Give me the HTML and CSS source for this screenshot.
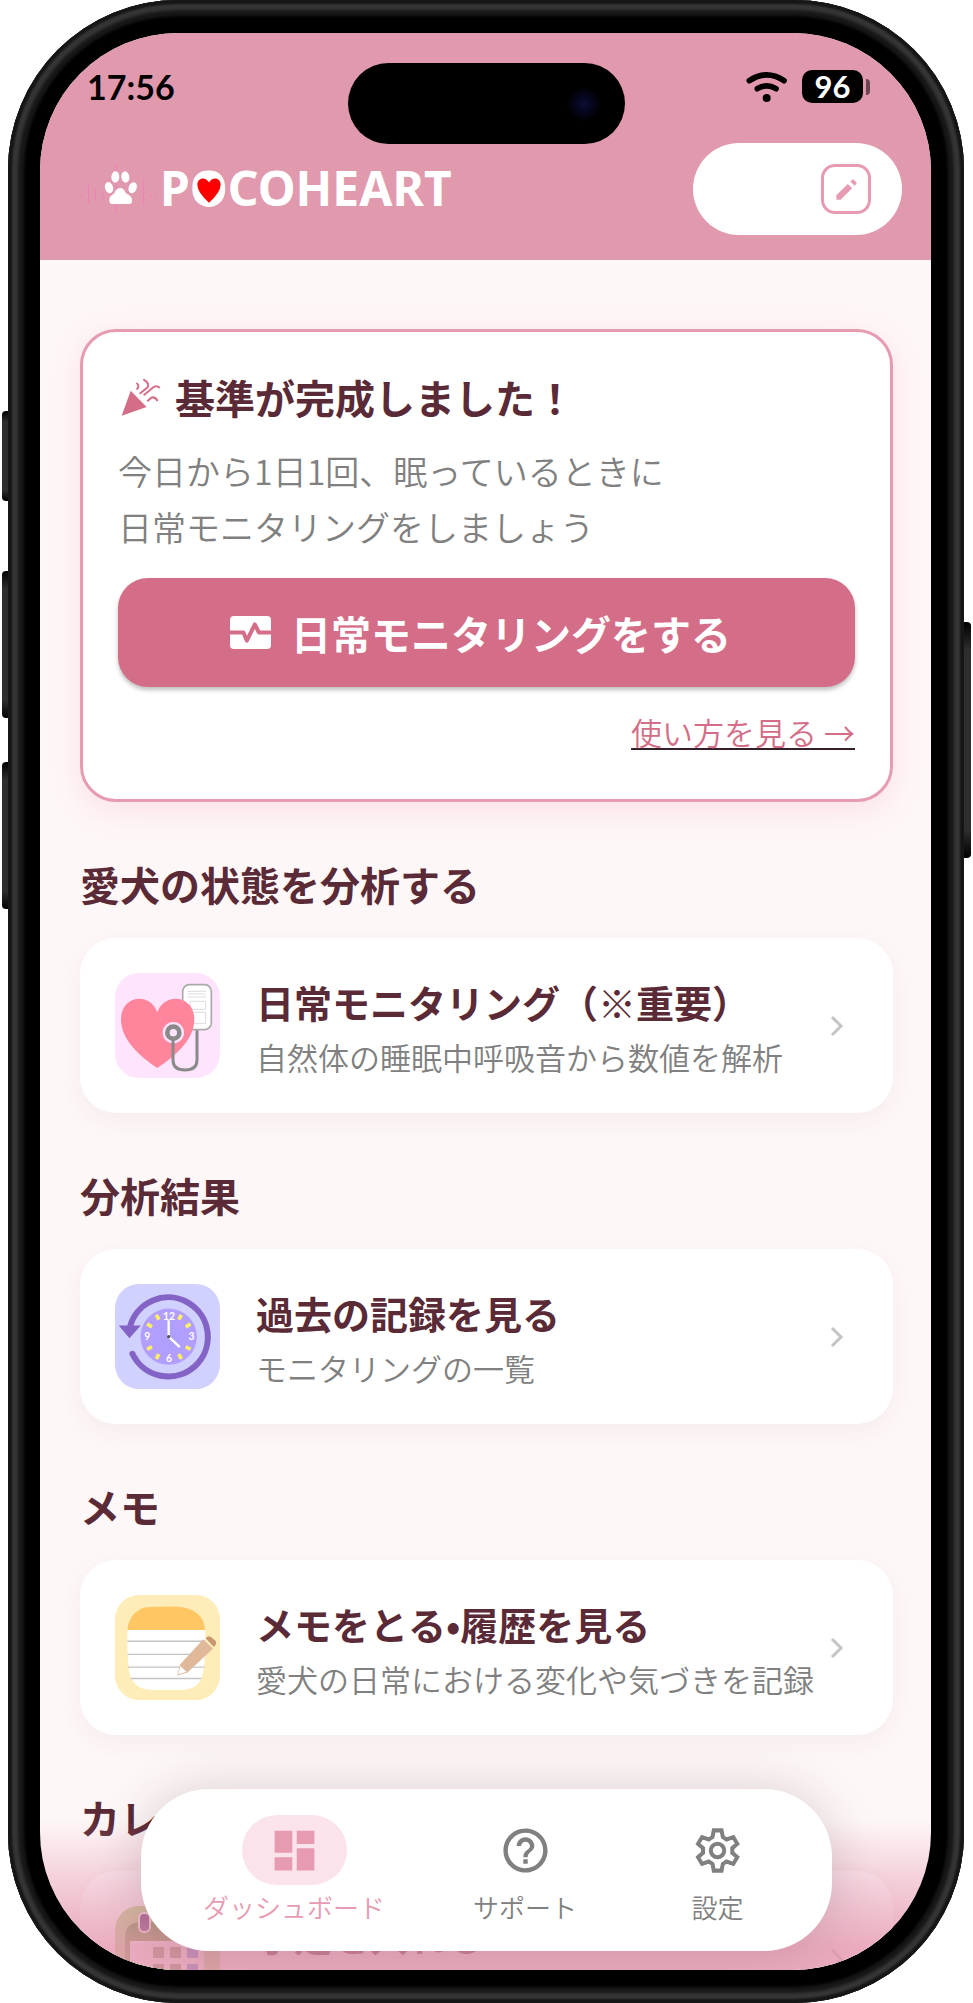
FILE: index.html
```html
<!DOCTYPE html>
<html lang="ja">
<head>
    <meta charset="UTF-8">
    <meta name="viewport" content="width=device-width, initial-scale=1.0">
    <title>POCOHEART</title>
    <link rel="stylesheet" href="styles.css">
</head>
<body>
    <div class="phone">
        <span class="side-button action"></span>
        <span class="side-button volume-up"></span>
        <span class="side-button volume-down"></span>
        <span class="side-button power"></span>

        <div class="screen">
            <div class="island"><span class="lens"></span></div>

            <header class="header">
                <div class="status-bar">
                    <span class="time">17:56</span>
                    <div class="status-icons">
                        <svg class="wifi" viewBox="776 212 126 96" aria-hidden="true">
                            <g fill="none" stroke="#000" stroke-linecap="round">
                                <path d="M786 241Q838 206 890 241" stroke-width="17"/>
                                <path d="M810 265Q838 248 866 265" stroke-width="17"/>
                            </g>
                            <circle cx="838" cy="293" r="12"/>
                        </svg>
                        <span class="battery">96</span>
                    </div>
                </div>
                <div class="app-bar">
                    <div class="logo">
                        <svg class="paw" viewBox="240 486 234 156" aria-hidden="true">
                            <g stroke="#f07fba" stroke-width="3" fill="none">
                                <path d="M245 580v8M266 550v56M286 566v32M308 572v28M349 488v150M431 534v78M452 576v12M470 580v6"/>
                            </g>
                            <g fill="#fff">
                                <ellipse cx="346" cy="528" rx="12" ry="17" transform="rotate(4 346 528)"/>
                                <ellipse cx="376" cy="528" rx="12" ry="17" transform="rotate(-8 376 528)"/>
                                <ellipse cx="327" cy="560" rx="12" ry="17" transform="rotate(-16 327 560)"/>
                                <ellipse cx="398" cy="560" rx="12" ry="17" transform="rotate(22 398 560)"/>
                                <path d="M361 561c10 0 14 10 17 16 7 5 18 8 18 20 0 8-2 12-8 12h-52c-6 0-8-4-8-12 0-12 9-14 15-20 3-7 8-16 18-16z"/>
                            </g>
                        </svg>
                        <span class="logo-text">P<span class="logo-o">O<svg viewBox="0 0 32 34" aria-hidden="true"><ellipse cx="16" cy="17" rx="15" ry="16" fill="#fff"/><path d="M16 29Q5 19 5 12C5 5 13 4 16 10C19 4 27 5 27 12Q27 19 16 29z" fill="#f00"/></svg></span>COHEART</span>
                    </div>
                    <div class="profile">
                        <button class="edit" type="button" aria-label="編集">
                            <svg viewBox="0 0 24 24"><path d="M3 17.2V21h3.800L17 10.800 13.200 7 3 17.200zM20.700 7c.4-.4.4-1 0-1.400L18.400 3.300c-.4-.4-1-.4-1.400 0l-1.600 1.600 3.800 3.800L20.700 7z"/></svg>
                        </button>
                    </div>
                </div>
            </header>

            <main class="content">
                <section class="notice">
                    <h2 class="notice-title">
                        <svg class="popper" viewBox="184 200 120 114" aria-hidden="true">
                            <path d="M213 238l48 49-75 26z" fill="#d46e88"/>
                            <g fill="none" stroke="#d46e88" stroke-width="6">
                                <path d="M230 215q12 8 1 20M251 204q20 12 13 24l-24 19M252 252l30-25q10-6 18 3M263 270l12-11q11-4 19 10"/>
                            </g>
                        </svg>
                        基準が完成しました！
                    </h2>
                    <p class="notice-text">今日から1日1回、眠っているときに<br>日常モニタリングをしましょう</p>
                    <button class="primary" type="button">
                        <svg viewBox="0 0 122 98" aria-hidden="true">
                            <rect width="122" height="98" rx="12" fill="#fff"/>
                            <path d="M0 49h40l10 24 24-48 12 24h36" fill="none" stroke="#d46e88" stroke-width="12" stroke-linejoin="round"/>
                        </svg>
                        日常モニタリングをする
                    </button>
                    <a class="guide" href="#">使い方を見る →</a>
                </section>

                <h2 class="section-title">愛犬の状態を分析する</h2>
                <a class="card" href="#">
                    <svg class="card-icon" viewBox="105 99 315 315" aria-hidden="true">
                        <rect x="105" y="99" width="315" height="315" rx="72" fill="#fee5fd"/>
                        <rect x="308" y="134" width="86" height="135" rx="20" fill="#fff" stroke="#aaa" stroke-width="5"/>
                        <path d="M323 154h55M323 162h55M323 171h55M330 184h47v24h-47zM330 217h47v33h-47z" fill="none" stroke="#ddd" stroke-width="3"/>
                        <path d="M232 384C180 350 123 300 123 238C123 165 210 155 232 217C254 155 343 165 343 238C343 300 284 350 232 384z" fill="#ff859c"/>
                        <path d="M279 298v62q0 30 36 30t36-30v-89" fill="none" stroke="#8a8a8a" stroke-width="9"/>
                        <circle cx="280" cy="278" r="32" fill="#fee5fd"/>
                        <path d="M279 298v20" stroke="#8a8a8a" stroke-width="9"/>
                        <circle cx="280" cy="278" r="18" fill="#fee5fd" stroke="#8a8a8a" stroke-width="14"/>
                    </svg>
                    <span class="card-text">
                        <span class="card-title">日常モニタリング（※重要）</span>
                        <span class="card-sub">自然体の睡眠中呼吸音から数値を解析</span>
                    </span>
                    <svg class="chevron" viewBox="0 0 14 22" aria-hidden="true"><path d="M2 2l9 9-9 9"/></svg>
                </a>

                <h2 class="section-title">分析結果</h2>
                <a class="card" href="#">
                    <svg class="card-icon" viewBox="105 74 313 313" aria-hidden="true">
                        <rect x="105" y="74" width="313" height="313" rx="72" fill="#d1d1ff"/>
                        <path d="M149 204A118 118 0 1 1 157 282" fill="none" stroke="#8463c6" stroke-width="18" stroke-linecap="round"/>
                        <path d="M116 198h66l-34 38z" fill="#8463c6"/>
                        <circle cx="265" cy="231" r="84" fill="#b19eff"/>
                        <path d="M228 166l8 14M303 166l-8 14M201 193l14 9M330 193l-14 9M201 269l14-8M330 269l-14-8M228 297l8-14M303 297l-8-14" stroke="#fff064" stroke-width="11"/>
                        <g class="dial">
                            <text x="266" y="180">12</text>
                            <text x="333" y="241">3</text>
                            <text x="266" y="306">6</text>
                            <text x="201" y="241">9</text>
                        </g>
                        <path d="M265 231v-49M265 231l33 31" stroke="#fff" stroke-width="7"/>
                        <circle cx="265" cy="231" r="5" fill="#555"/>
                    </svg>
                    <span class="card-text">
                        <span class="card-title">過去の記録を見る</span>
                        <span class="card-sub">モニタリングの一覧</span>
                    </span>
                    <svg class="chevron" viewBox="0 0 14 22" aria-hidden="true"><path d="M2 2l9 9-9 9"/></svg>
                </a>

                <h2 class="section-title">メモ</h2>
                <a class="card" href="#">
                    <svg class="card-icon" viewBox="105 77 313 313" aria-hidden="true">
                        <rect x="105" y="77" width="313" height="313" rx="72" fill="#ffedb9"/>
                        <path d="M142 180h231q4 60-4 120q-7 60-65 60h-90q-58 0-68-60q-6-60-4-120z" fill="#fff"/>
                        <path d="M142 181q3-40 32-58q15-11 40-10q40-3 80-1q35 2 58 22q20 17 21 47z" fill="#ffc663"/>
                        <path d="M142 215h232M142 254h232M143 292h229M152 326h210" stroke="#c4c4c4" stroke-width="4"/>
                        <path d="M368 209l29 28-76 71-31 10 9-34z" fill="#dfb999"/>
                        <path d="M300 289l18 17-25 8z" fill="#fff"/>
                        <path d="M375 206q8-9 16-4l14 12q5 6-5 18z" fill="#c9976f"/>
                    </svg>
                    <span class="card-text">
                        <span class="card-title">メモをとる•履歴を見る</span>
                        <span class="card-sub">愛犬の日常における変化や気づきを記録</span>
                    </span>
                    <svg class="chevron" viewBox="0 0 14 22" aria-hidden="true"><path d="M2 2l9 9-9 9"/></svg>
                </a>

                <h2 class="section-title">カレンダー</h2>
                <a class="card" href="#">
                    <svg class="card-icon" viewBox="0 0 105 105" aria-hidden="true">
                        <rect width="105" height="105" rx="24" fill="#b9dc8c"/>
                        <path d="M10 90V32Q10 16 26 16H72Q89 16 89 32V90z" fill="#6f9a3c"/>
                        <path d="M15 35h74v60H15z" fill="#fff"/>
                        <rect x="24" y="7" width="11" height="19" rx="5" fill="#6a3a78" stroke="#fff" stroke-width="2"/>
                        <path d="M38 41h11v11H38zM55 41h11v11H55zM38 58h11v11H38zM55 58h11v11H55z" fill="#7d8f60"/>
                        <path d="M72 41h11v11H72zM72 58h11v11H72z" fill="#5a7fe0"/>
                    </svg>
                    <span class="card-text">
                        <span class="card-title">予定を入れる</span>
                    </span>
                    <svg class="chevron" viewBox="0 0 14 22" aria-hidden="true"><path d="M2 2l9 9-9 9"/></svg>
                </a>
            </main>

            <div class="fade"></div>
            <nav class="tabs">
                <a class="tab active" href="#">
                    <span class="tab-icon">
                        <svg viewBox="0 0 24 24" aria-hidden="true"><path d="M3 13h8V3H3v10zm0 8h8v-6H3v6zm10 0h8V11h-8v10zm0-18v6h8V3h-8z"/></svg>
                    </span>
                    ダッシュボード
                </a>
                <a class="tab" href="#">
                    <span class="tab-icon">
                        <svg viewBox="0 0 24 24" aria-hidden="true"><path d="M11 18h2v-2h-2v2zm1-16C6.480 2 2 6.480 2 12s4.480 10 10 10 10-4.480 10-10S17.520 2 12 2zm0 18c-4.410 0-8-3.590-8-8s3.590-8 8-8 8 3.590 8 8-3.590 8-8 8zm0-14c-2.210 0-4 1.790-4 4h2c0-1.100.9-2 2-2s2 .9 2 2c0 2-3 1.750-3 5h2c0-2.250 3-2.500 3-5 0-2.210-1.790-4-4-4z"/></svg>
                    </span>
                    サポート
                </a>
                <a class="tab" href="#">
                    <span class="tab-icon">
                        <svg viewBox="612 251 158 158" aria-hidden="true">
                            <path d="M680 270h23l4 20 11 7 20-7 12 20-15 13v14l15 13-12 20-20-7-11 7-4 20h-23l-4-20-11-7-20 7-12-20 15-13v-14l-15-13 12-20 20 7 11-7z" fill="none" stroke="currentColor" stroke-width="12"/>
                            <circle cx="691" cy="330" r="20" fill="none" stroke="currentColor" stroke-width="12"/>
                        </svg>
                    </span>
                    設定
                </a>
            </nav>
        </div>
    </div>
</body>
</html>
```

FILE: styles.css
```css
* {
    box-sizing: border-box;
}
body {
    margin: 0;
    background-color: #fff;
    font-family: "Noto Sans CJK JP", sans-serif;
    color: #5a2a36;
}
a {
    color: inherit;
    text-decoration: none;
}
h2, p {
    margin: 0;
}
svg {
    display: block;
    flex: none;
}

/* device frame */
.phone {
    position: relative;
    height: 100vh;
    margin: 0 9px 0 8px;
    padding: 33px 33px 33px 32px;
    border-radius: 170px;
    background: #000;
    box-shadow: inset 0 0 2px 4px #161616, inset 0 0 3px 10px #363636, inset 0 0 3px 16px #181818;
}
.side-button {
    position: absolute;
    left: -6px;
    width: 6px;
    background: linear-gradient(#000, #2e2e2e 12%, #2e2e2e 88%, #000);
    border-radius: 4px 0 0 4px;
}
.action {
    top: 411px;
    height: 90px;
}
.volume-up {
    top: 571px;
    height: 147px;
}
.volume-down {
    top: 762px;
    height: 147px;
}
.power {
    top: 622px;
    left: auto;
    right: -7px;
    width: 7px;
    height: 236px;
    border-radius: 0 4px 4px 0;
}
.screen {
    position: relative;
    height: 100%;
    overflow: hidden;
    border-radius: 138px;
    background-color: #fef7f7;
}
.island {
    position: absolute;
    top: 30px;
    left: 50%;
    width: 277px;
    height: 81px;
    margin-left: -138px;
    border-radius: 41px;
    background-color: #000;
}
.lens {
    position: absolute;
    top: 24px;
    right: 24px;
    width: 34px;
    height: 34px;
    border-radius: 50%;
    background: radial-gradient(#0a0c38, #000 70%);
}

/* header */
.header {
    padding-bottom: 25px;
    background-color: #e099ad;
}
.status-bar {
    display: flex;
    justify-content: space-between;
    align-items: center;
    padding: 37px 68px 0 47px;
    color: #000;
}
.time {
    font: 700 34px/33px Lato, sans-serif;
}
.status-icons {
    display: flex;
    align-items: center;
    gap: 14px;
}
.wifi {
    width: 42px;
    height: 32px;
}
.battery {
    position: relative;
    width: 61px;
    height: 33px;
    border-radius: 10px;
    background-color: #000;
    color: #fff;
    font: 700 31px/33px Lato, sans-serif;
    text-align: center;
}
.battery::after {
    content: "";
    position: absolute;
    top: 9px;
    right: -7px;
    width: 4px;
    height: 16px;
    border-radius: 0 4px 4px 0;
    background-color: #6b4450;
}
.app-bar {
    display: flex;
    justify-content: space-between;
    align-items: center;
    margin-top: 40px;
    padding: 0 29px 0 40px;
}
.logo {
    display: flex;
    align-items: center;
    gap: 2px;
}
.paw {
    width: 78px;
    height: 52px;
}
.logo-text {
    padding-bottom: 2px;
    color: #fff;
    font: 700 48px/60px "Noto Sans", sans-serif;
}
.logo-o {
    position: relative;
}
.logo-o svg {
    position: absolute;
    left: 2px;
    bottom: 12px;
    width: 34px;
    height: 36px;
}
.profile {
    display: flex;
    justify-content: flex-end;
    align-items: center;
    width: 209px;
    height: 92px;
    padding-right: 31px;
    border-radius: 46px;
    background-color: #fff;
}
.edit {
    display: grid;
    place-items: center;
    width: 50px;
    height: 50px;
    padding: 0;
    border: 3px solid #e79bb1;
    border-radius: 14px;
    background-color: #fff;
}
.edit svg {
    width: 27px;
    height: 27px;
    fill: #e79bb1;
}

/* notice card */
.content {
    padding: 69px 38px 0 40px;
}
.notice {
    display: flex;
    flex-direction: column;
    height: 473px;
    padding: 35px;
    border: 3px solid #e79bb1;
    border-radius: 36px;
    background-color: #fff;
    box-shadow: 0 8px 32px rgba(240, 130, 160, 0.18);
}
.notice-title {
    display: flex;
    align-items: center;
    gap: 14px;
    font-size: 40px;
    line-height: 60px;
}
.popper {
    width: 40px;
    height: 38px;
    margin-left: 3px;
}
.notice-text {
    margin-top: 16px;
    color: #808080;
    font-size: 34px;
    font-weight: 350;
    line-height: 56px;
}
.primary {
    display: flex;
    justify-content: center;
    align-items: center;
    gap: 20px;
    height: 109px;
    margin-top: 23px;
    padding: 0 12px 0 0;
    border: none;
    border-radius: 30px;
    background-color: #d46e88;
    box-shadow: 0 3px 4px rgba(0, 0, 0, 0.25);
    color: #fff;
    font: 700 40px/60px "Noto Sans CJK JP", sans-serif;
}
.primary svg {
    width: 41px;
    height: 33px;
}
.guide {
    align-self: flex-end;
    margin-top: 22px;
    color: #d46e88;
    font-size: 31px;
    font-weight: 350;
    line-height: 46px;
    text-decoration: underline #33202a 2px;
    text-underline-offset: 3px;
    text-decoration-skip-ink: none;
}

/* section cards */
.section-title {
    margin: 52px 0 24px;
    font-size: 40px;
    line-height: 60px;
}
.card {
    display: flex;
    align-items: center;
    height: 175px;
    padding: 0 49px 0 35px;
    border-radius: 36px;
    background-color: #fff;
    box-shadow: 0 8px 24px rgba(90, 42, 54, 0.05);
}
.card-icon {
    width: 105px;
    height: 105px;
}
.card-text {
    display: flex;
    flex: 1;
    flex-direction: column;
    align-self: flex-start;
    padding: 36px 0 0 36px;
    white-space: nowrap;
}
.card-title {
    font-size: 38px;
    font-weight: 700;
    line-height: 56px;
}
.card-sub {
    color: #808080;
    font-size: 31px;
    font-weight: 350;
    line-height: 54px;
}
.chevron {
    width: 14px;
    height: 22px;
    fill: none;
    stroke: #c4c4c4;
    stroke-width: 3;
}
.dial {
    fill: #fff;
    font: 700 31px Lato, sans-serif;
    text-anchor: middle;
}

/* bottom tabs */
.fade {
    position: absolute;
    inset: auto 0 0;
    height: 150px;
    background: linear-gradient(rgba(229, 150, 174, 0), rgba(229, 150, 174, 0.45) 45%, rgba(229, 150, 174, 0.8) 85%);
}
.tabs {
    position: absolute;
    inset: auto 99px 19px 101px;
    display: flex;
    justify-content: space-between;
    height: 162px;
    padding: 26px 62px 0;
    border-radius: 68px;
    background-color: #fff;
    box-shadow: 0 0 50px rgba(60, 30, 40, 0.18);
}
.tab {
    display: flex;
    flex-direction: column;
    align-items: center;
    min-width: 105px;
    color: #808080;
    font-size: 26px;
    font-weight: 350;
    line-height: 44px;
}
.tab-icon {
    display: grid;
    place-items: center;
    width: 105px;
    height: 70px;
    border-radius: 35px;
}
.tab-icon svg {
    width: 53px;
    height: 53px;
    fill: currentColor;
}
.active {
    color: #e79bb1;
}
.active .tab-icon {
    background-color: #fbe3eb;
}
```
